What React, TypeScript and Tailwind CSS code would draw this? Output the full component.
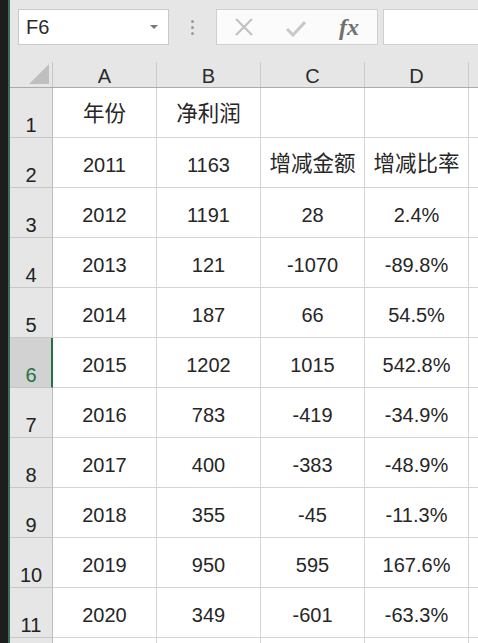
const rows: string[][] = [
  ["年份", "净利润", "", ""],
  ["2011", "1163", "增减金额", "增减比率"],
  ["2012", "1191", "28", "2.4%"],
  ["2013", "121", "-1070", "-89.8%"],
  ["2014", "187", "66", "54.5%"],
  ["2015", "1202", "1015", "542.8%"],
  ["2016", "783", "-419", "-34.9%"],
  ["2017", "400", "-383", "-48.9%"],
  ["2018", "355", "-45", "-11.3%"],
  ["2019", "950", "595", "167.6%"],
  ["2020", "349", "-601", "-63.3%"],
];

const selectedRow = 6;

const isCjk = (s: string) => /[\u4e00-\u9fff]/.test(s);

function Toolbar() {
  return (
    <div className="h-[60px] shrink-0 flex items-start pt-[9px]">
      <div className="ml-[8px] w-[151px] h-[36px] bg-white border border-[#c9c9c9] flex items-center pl-[7px] pr-[10px]">
        <span className="text-[20px] text-[#2b2b2b] flex-1">F6</span>
        <span className="w-0 h-0 border-l-[4px] border-r-[4px] border-t-[4px] border-l-transparent border-r-transparent border-t-[#777]" />
      </div>
      <div className="w-[47px] h-[36px] flex flex-col items-center justify-center gap-[3px]">
        <span className="size-[3px] rounded-full bg-[#9a9a9a]" />
        <span className="size-[3px] rounded-full bg-[#9a9a9a]" />
        <span className="size-[3px] rounded-full bg-[#9a9a9a]" />
      </div>
      <div className="w-[162px] h-[36px] bg-[#fbfbfb] border border-[#cfcfcf] flex items-center">
        <div className="w-[52px] flex justify-center pl-[2px]">
          <svg width="20" height="18" viewBox="0 0 20 18" fill="none">
            <path d="M2 1 L18 17 M18 1 L2 17" stroke="#c2c2c2" strokeWidth="2.2" />
          </svg>
        </div>
        <div className="w-[54px] flex justify-center pt-[4px]">
          <svg width="20" height="16" viewBox="0 0 20 16" fill="none">
            <path d="M1 8 L7 14 L19 1" stroke="#c8c8c8" strokeWidth="3" />
          </svg>
        </div>
        <div className="flex-1 flex justify-center pr-[2px]">
          <span className="font-['Liberation_Serif',serif] italic font-bold text-[24px] text-[#707070] leading-none">
            fx
          </span>
        </div>
      </div>
      <div className="ml-[5px] flex-1 h-[36px] bg-white border border-[#cfcfcf] border-r-0" />
    </div>
  );
}

function HeaderRow() {
  return (
    <div className="h-[28px] shrink-0 flex border-b border-[#ababab]">
      <div className="w-[43px] shrink-0 border-r border-[#c6c6c6] flex items-end justify-end pr-[3px] pb-[3px] mt-[2px]">
        <span className="w-0 h-0 border-b-[20px] border-l-[20px] border-b-[#bfbfbf] border-l-transparent" />
      </div>
      {["A", "B", "C", "D"].map((c) => (
        <div
          key={c}
          className="w-[104px] shrink-0 border-r border-[#cacaca] mt-[2px] flex items-center justify-center pt-[3px] text-[20px] text-[#2b2b2b]"
        >
          {c}
        </div>
      ))}
      <div className="flex-1 mt-[2px]" />
    </div>
  );
}

function DataRow({ n, cells }: { n?: number; cells: string[] }) {
  const sel = n === selectedRow;
  return (
    <div className="h-[50px] shrink-0 flex">
      <div
        className={
          sel
            ? "w-[43px] shrink-0 bg-[#d2d2d2] border-r-2 border-r-[#217346] border-b border-b-[#c4c4c4] flex items-end justify-center pb-[2px] pl-[1px] text-[20px] leading-[20px] text-[#217346]"
            : "w-[43px] shrink-0 bg-[#e6e6e6] border-r border-r-[#bdbdbd] border-b border-b-[#c8c8c8] flex items-end justify-center pb-[2px] text-[20px] leading-[20px] text-[#222]"
        }
      >
        {n}
      </div>
      {cells.map((v, i) => (
        <div
          key={i}
          className={
            isCjk(v)
              ? "w-[104px] shrink-0 bg-white border-r border-b border-[#d4d4d4] flex items-center justify-center pt-[4px] text-[21.5px] text-[#262626]"
              : "w-[104px] shrink-0 bg-white border-r border-b border-[#d4d4d4] flex items-center justify-center pt-[4px] text-[20px] text-[#262626]"
          }
        >
          {v}
        </div>
      ))}
      <div className="flex-1 bg-white border-b border-[#d4d4d4]" />
    </div>
  );
}

export default function App() {
  return (
    <div className="w-[478px] h-[643px] overflow-hidden flex bg-[#e6e6e6] font-['Liberation_Sans','Noto_Sans_CJK_SC',sans-serif]">
      <div className="w-[8px] shrink-0 bg-[#1d1d1d]" />
      <div className="w-[2px] shrink-0 bg-[#3f6e5b]" />
      <div className="flex-1 flex flex-col min-w-0">
        <Toolbar />
        <HeaderRow />
        {rows.map((r, i) => (
          <DataRow key={i} n={i + 1} cells={r} />
        ))}
        <DataRow cells={["", "", "", ""]} />
      </div>
    </div>
  );
}
